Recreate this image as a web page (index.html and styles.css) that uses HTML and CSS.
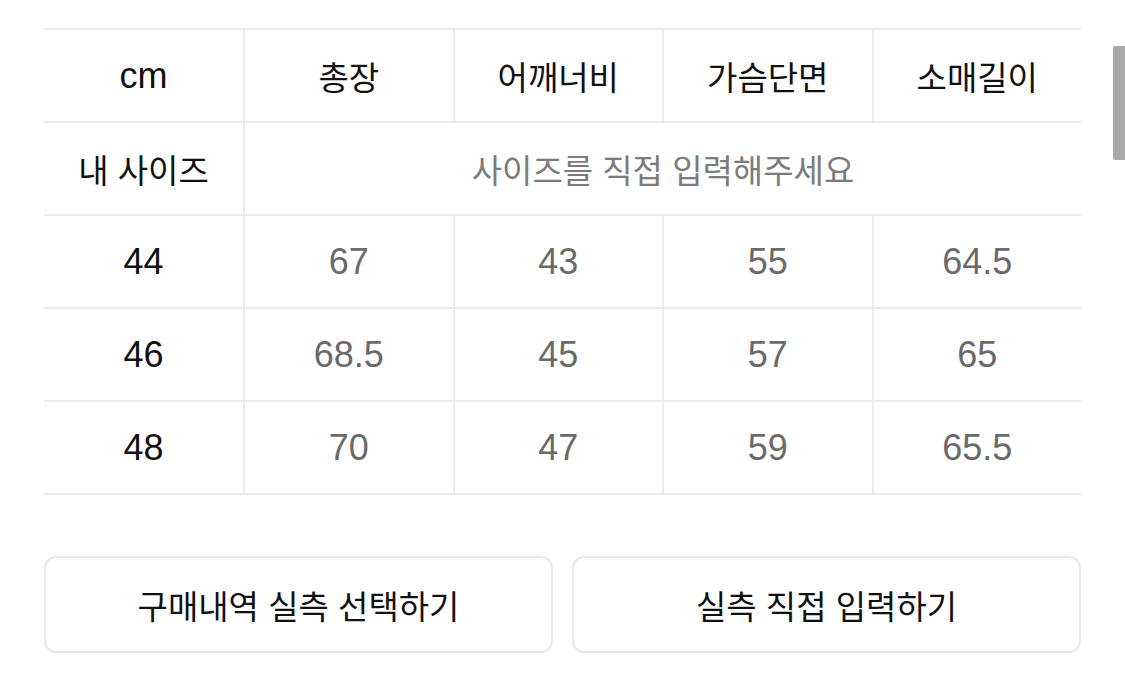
FILE: index.html
```html
<!DOCTYPE html>
<html lang="ko">
<head>
<meta charset="utf-8">
<title>사이즈 표</title>
<link rel="stylesheet" href="styles.css">
</head>
<body>
<div class="page">
  <div class="size-table">
    <div class="cell first latin">cm</div>
    <div class="cell head">총장</div>
    <div class="cell head">어깨너비</div>
    <div class="cell head">가슴단면</div>
    <div class="cell head">소매길이</div>

    <div class="cell first">내 사이즈</div>
    <div class="cell input-cell">사이즈를 직접 입력해주세요</div>

    <div class="cell first latin">44</div>
    <div class="cell val">67</div>
    <div class="cell val">43</div>
    <div class="cell val">55</div>
    <div class="cell val">64.5</div>

    <div class="cell first latin">46</div>
    <div class="cell val">68.5</div>
    <div class="cell val">45</div>
    <div class="cell val">57</div>
    <div class="cell val">65</div>

    <div class="cell first latin">48</div>
    <div class="cell val">70</div>
    <div class="cell val">47</div>
    <div class="cell val">59</div>
    <div class="cell val">65.5</div>
  </div>

  <div class="actions">
    <button class="btn">구매내역 실측 선택하기</button>
    <button class="btn">실측 직접 입력하기</button>
  </div>
</div>
<div class="scrollbar"></div>
</body>
</html>
```

FILE: styles.css
```css
html, body {
  margin: 0;
  padding: 0;
  background: #ffffff;
  overflow: hidden;
  height: 681px;
}

body {
  font-family: "Liberation Sans", "Noto Sans CJK KR", sans-serif;
  color: #141414;
}

.page {
  padding: 28px 44px 0 44px;
  width: 1037px;
}

.size-table {
  display: grid;
  grid-template-columns: 199px repeat(4, 1fr);
  border-top: 2px solid #ebebeb;
}

.cell {
  height: 91px;
  border-bottom: 2px solid #ebebeb;
  border-left: 2px solid #ebebeb;
  display: flex;
  align-items: center;
  justify-content: center;
  font-size: 33px;
  font-weight: 400;
  color: #111111;
  box-sizing: content-box;
}

.cell.first {
  border-left: none;
}

.latin {
  font-size: 36px;
}

.val {
  font-size: 36px;
  color: #6a6a6a;
}

.input-cell {
  grid-column: 2 / span 4;
  font-size: 33px;
  color: #7b7b7b;
}

.actions {
  display: flex;
  gap: 19px;
  margin-top: 61px;
}

.btn {
  flex: 1;
  height: 97px;
  border: 2px solid #e8e8e8;
  border-radius: 12px;
  background: #ffffff;
  font-family: "Liberation Sans", "Noto Sans CJK KR", sans-serif;
  font-size: 33px;
  font-weight: 400;
  color: #111111;
  padding: 0;
}

.scrollbar {
  position: absolute;
  top: 46px;
  left: 1113px;
  width: 12px;
  height: 114px;
  background: #a9a9a9;
  border-radius: 2px 0 0 2px;
}
```
